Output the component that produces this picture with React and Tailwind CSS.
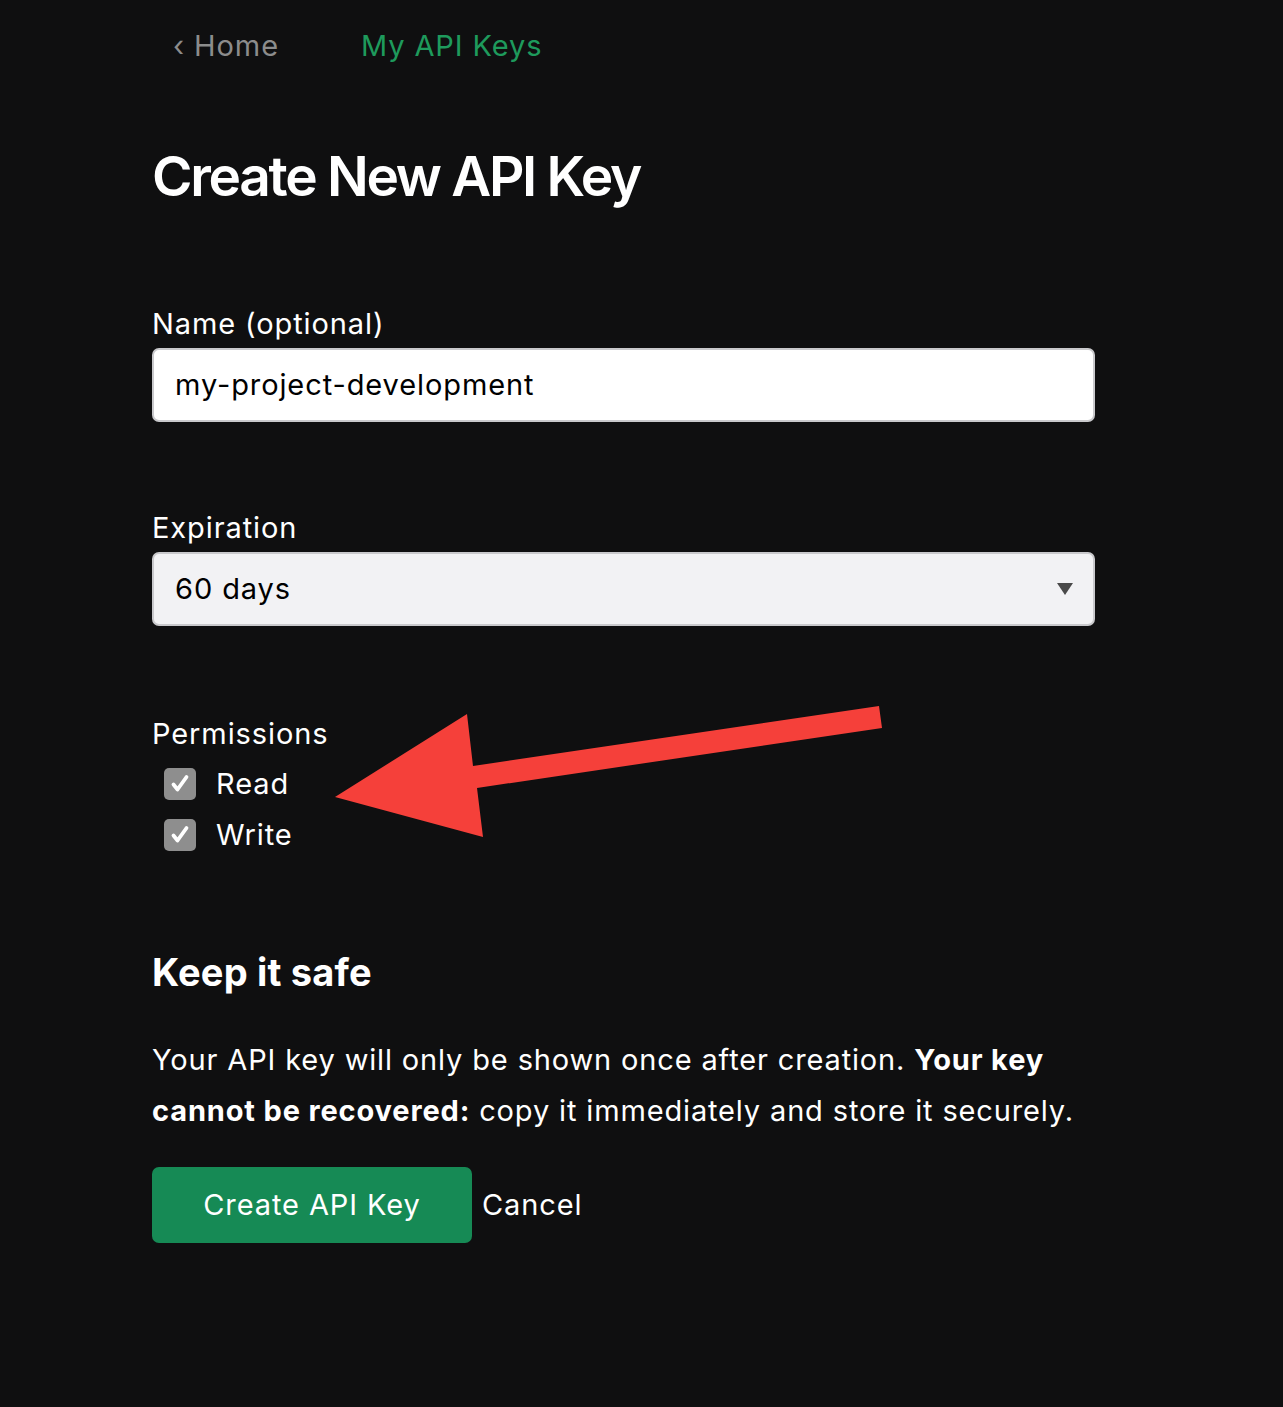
import React from "react";

function Check() {
  return (
    <span className="flex h-[32px] w-[32px] items-center justify-center rounded-[5px] bg-[#8e8e8e]">
      <svg viewBox="0 0 24 24" className="h-[24px] w-[24px]" fill="none" stroke="white" strokeWidth="3.8" strokeLinecap="round" strokeLinejoin="round">
        <path d="M5.5 12.5l4 5L18.5 5" />
      </svg>
    </span>
  );
}

export default function App() {
  return (
    <div className="relative min-h-[1407px] bg-[#0f0f10] font-['Inter',sans-serif] text-white tracking-[0.9px]">
      <nav className="flex items-center gap-[82px] pl-[173px] pt-[26px] text-[29px] leading-[40px]">
        <a className="text-[#8c8c8c]">‹ Home</a>
        <a className="text-[#1e9a5c]">My API Keys</a>
      </nav>

      <main className="w-[943px] ml-[152px]">
        <h1 className="mt-[78px] text-[55px] font-semibold leading-[64px] tracking-[-2.3px]">Create New API Key</h1>

        <form className="mt-[96px]">
          <label className="block text-[29px] leading-[40px]">Name (optional)</label>
          <div className="mt-[4px] flex h-[74px] items-center rounded-[7px] border-2 border-[#c9c9cc] bg-white px-[21px] text-[29px] text-black">
            my-project-development
          </div>

          <label className="mt-[86px] block text-[29px] leading-[40px]">Expiration</label>
          <div className="mt-[4px] flex h-[74px] items-center justify-between rounded-[7px] border-2 border-[#c9c9cc] bg-[#f2f2f4] pl-[21px] pr-[20px] text-[29px] text-black">
            <span>60 days</span>
            <svg viewBox="0 0 16 12" className="h-[12px] w-[16px]"><path d="M0 0h16L8 12z" fill="#4a4a4a" /></svg>
          </div>

          <div className="mt-[88px] text-[29px] leading-[40px]">Permissions</div>
          <div className="mt-[14px] flex flex-col gap-[19px] pl-[12px]">
            <label className="flex items-center gap-[20px] text-[29px] leading-[32px]"><Check />Read</label>
            <label className="flex items-center gap-[20px] text-[29px] leading-[32px]"><Check />Write</label>
          </div>

          <h2 className="mt-[97px] text-[38px] font-bold leading-[48px] tracking-[0.2px]">Keep it safe</h2>
          <p className="mt-[38px] text-[29px] leading-[51px] tracking-[0.85px]">
            Your API key will only be shown once after creation. <strong>Your key cannot be recovered:</strong> copy it immediately and store it securely.
          </p>

          <div className="mt-[31px] flex items-center gap-[10px]">
            <button type="button" className="h-[76px] w-[320px] rounded-[7px] bg-[#168a55] text-[29px] text-white">Create API Key</button>
            <button type="button" className="text-[29px] text-white">Cancel</button>
          </div>
        </form>
      </main>

      <svg className="absolute left-0 top-0" width="1283" height="1407" viewBox="0 0 1283 1407">
        <polygon points="335,797 467,714 473,766 879,706 882,728 477,788 483,837" fill="#f5403a" />
      </svg>
    </div>
  );
}
